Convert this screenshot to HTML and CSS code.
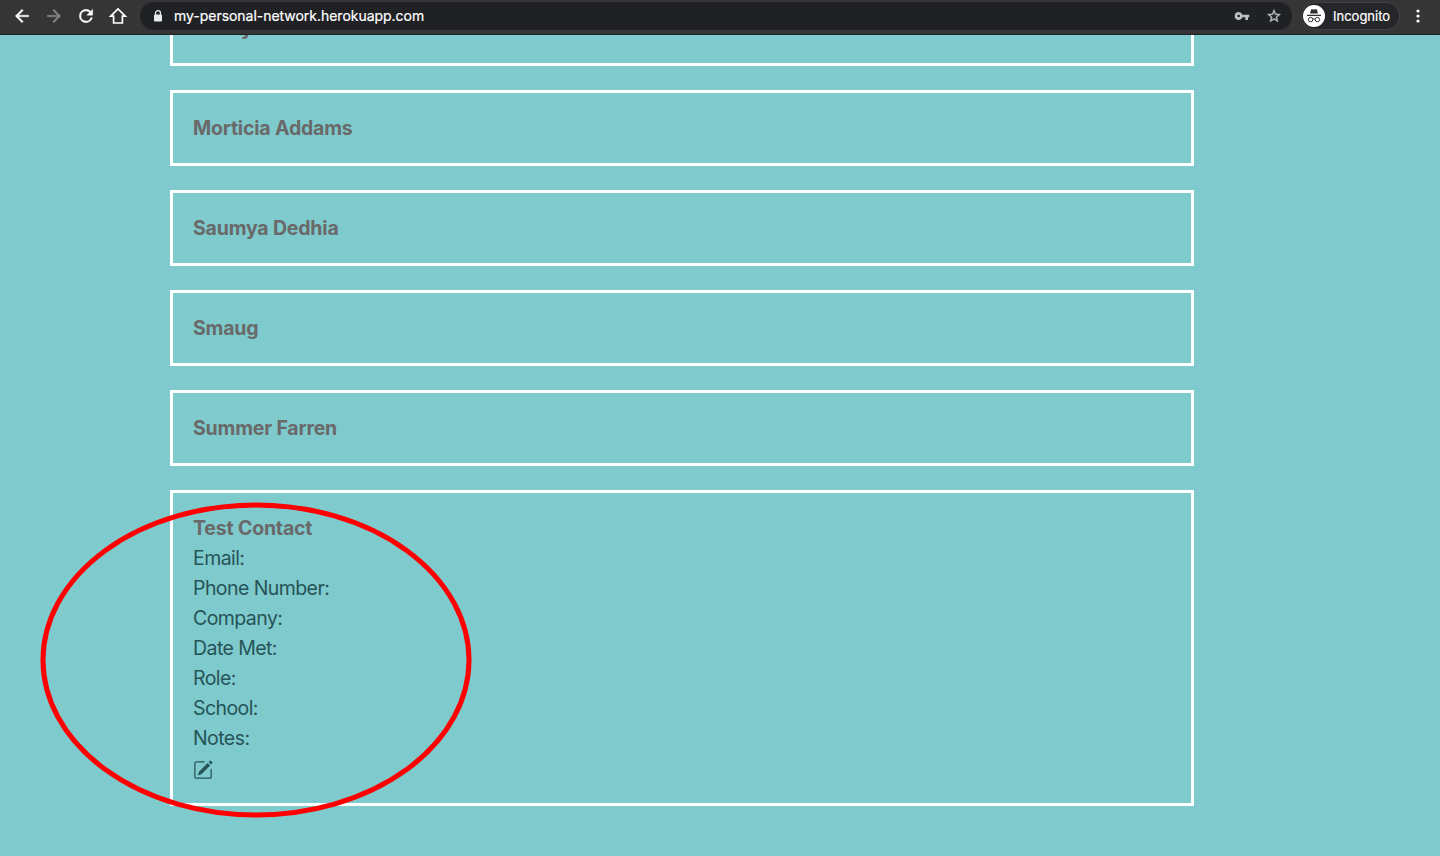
FILE: index.html
```html
<!DOCTYPE html>
<html lang="en">
<head>
<meta charset="utf-8">
<title>My Personal Network</title>
<link rel="stylesheet" href="styles.css">
</head>
<body>
<header class="toolbar">
  <nav class="nav">
    <svg class="icon" viewBox="0 0 24 24"><path d="M20 11H7.830l5.590-5.590L12 4l-8 8 8 8 1.410-1.410L7.830 13H20z"/></svg>
    <svg class="icon icon-off" viewBox="0 0 24 24"><path d="M4 11V13H16.170L10.590 18.590L12 20L20 12L12 4L10.590 5.410L16.170 11z"/></svg>
    <svg class="icon" viewBox="0 0 24 24"><path d="M17.650 6.350A7.960 7.960 0 0 0 12 4a8 8 0 1 0 7.730 10h-2.080A6 6 0 1 1 12 6c1.660 0 3.140.690 4.220 1.780L13 11h7V4z"/></svg>
    <svg class="icon icon-home" viewBox="0 0 20 20"><path d="M2.700 10.200H5.600V17H14.400V10.200H17.300L10 2.900z"/></svg>
  </nav>
  <div class="address">
    <svg class="lock" viewBox="0 0 10 12"><path d="M2.500 5V3.200a2.500 2.500 0 0 1 5 0V5" fill="none" stroke="#e8eaed" stroke-width="1.200"/><rect x="1" y="4.500" width="8" height="7" rx="1" fill="#e8eaed"/></svg>
    <span class="url">my-personal-network.herokuapp.com</span>
    <svg class="key" viewBox="0 0 24 24"><path d="M12.650 10A5.990 5.990 0 0 0 7 6a6 6 0 1 0 5.650 8H17v4h4v-4h2v-4zM7 14a2 2 0 1 1 0-4 2 2 0 0 1 0 4z"/></svg>
    <svg class="star" viewBox="0 0 24 24"><path d="M22 9.240l-7.190-.620L12 2 9.190 8.630 2 9.240l5.460 4.730L5.820 21 12 17.270 18.180 21l-1.630-7.030zM12 15.400l-3.760 2.270 1-4.280-3.320-2.880 4.380-.380L12 6.100l1.710 4.040 4.380.380-3.320 2.880 1 4.280z"/></svg>
  </div>
  <div class="profile">
    <svg class="avatar" viewBox="0 0 22 22"><circle cx="11" cy="11" r="11" fill="#fff"/><path d="M7 8.500L8 4.700Q8.200 4 9 4.200L11 4.600L13 4.200Q13.800 4 14 4.700L15 8.500zM4 9.800H18V11H4z" fill="#303134"/><g fill="none" stroke="#303134" stroke-width="1"><circle cx="7.600" cy="14.600" r="2.200"/><circle cx="14.400" cy="14.600" r="2.200"/><path d="M9.800 14.300Q11 13.500 12.200 14.300"/></g></svg>
    <span class="mode">Incognito</span>
  </div>
  <svg class="menu" viewBox="0 0 4 14"><circle cx="2" cy="2" r="1.600"/><circle cx="2" cy="7" r="1.600"/><circle cx="2" cy="12" r="1.600"/></svg>
</header>
<main class="contacts">
  <section class="card"><h2 class="name">Kenny Jones</h2></section>
  <section class="card"><h2 class="name">Morticia Addams</h2></section>
  <section class="card"><h2 class="name">Saumya Dedhia</h2></section>
  <section class="card"><h2 class="name">Smaug</h2></section>
  <section class="card"><h2 class="name">Summer Farren</h2></section>
  <section class="card card-open">
    <h2 class="name">Test Contact</h2>
    <p class="field">Email:</p>
    <p class="field">Phone Number:</p>
    <p class="field">Company:</p>
    <p class="field">Date Met:</p>
    <p class="field">Role:</p>
    <p class="field">School:</p>
    <p class="field">Notes:</p>
    <svg class="edit" viewBox="0 0 16 16"><path d="M15.502 1.940a.5.5 0 0 1 0 .706L14.459 3.690l-2-2L13.502.646a.5.5 0 0 1 .707 0l1.293 1.293zm-1.750 2.456l-2-2L4.939 9.210a.5.5 0 0 0-.121.196l-.805 2.414a.25.25 0 0 0 .316.316l2.414-.805a.5.5 0 0 0 .196-.120l6.813-6.814z"/><path d="M1 13.500A1.500 1.500 0 0 0 2.500 15h11a1.500 1.500 0 0 0 1.500-1.500v-6a.5.5 0 0 0-1 0v6a.5.5 0 0 1-.5.5h-11a.5.5 0 0 1-.5-.5v-11a.5.5 0 0 1 .5-.5H9a.5.5 0 0 0 0-1H2.500A1.500 1.500 0 0 0 1 2.500z"/></svg>
  </section>
</main>
<svg class="highlight" viewBox="0 0 432 316"><ellipse cx="216" cy="158" rx="213" ry="155" fill="none" stroke="#f00" stroke-width="5"/></svg>
</body>
</html>
```
FILE: styles.css
```css
* { box-sizing: border-box; }
body {
  margin: 0;
  height: 856px;
  overflow: hidden;
  display: flex;
  flex-direction: column;
  background: #7fcacd;
  font-family: Inter, "Liberation Sans", sans-serif;
}
svg { display: block; flex: none; }
.toolbar {
  flex: none;
  height: 35px;
  padding: 2px 19px 0 12px;
  display: flex;
  align-items: flex-start;
  background: #353535;
  border-bottom: 1px solid #202124;
}
.nav { display: flex; gap: 12px; width: 128px; padding-top: 4px; }
.icon { width: 20px; height: 20px; fill: #fff; stroke: #fff; stroke-width: 0.5; }
.icon-off { fill: #868686; stroke: #868686; }
.icon-home { fill: none; stroke-width: 1.7; }
.address {
  width: 1152px;
  height: 28px;
  border-radius: 14px;
  padding: 0 10px 0 13px;
  display: flex;
  align-items: center;
  background: #202124;
}
.lock { width: 10px; height: 12px; }
.url {
  flex: 1;
  margin-left: 11px;
  color: #fff;
  font-size: 14px;
  line-height: 20px;
  letter-spacing: -0.03px;
  -webkit-text-stroke: 0.2px #fff;
}
.key { width: 16px; height: 16px; margin-right: 16px; fill: #bdc1c6; }
.star { width: 16px; height: 16px; fill: #bdc1c6; stroke: #bdc1c6; stroke-width: 0.5; }
.profile {
  width: 99px;
  height: 28px;
  margin-left: 9px;
  padding-left: 1px;
  border: 1px solid #404144;
  border-radius: 14px;
  display: flex;
  align-items: center;
  background: #252629;
}
.avatar { width: 22px; height: 22px; }
.mode {
  margin-left: 8px;
  color: #fff;
  font-size: 13px;
  line-height: 20px;
  -webkit-text-stroke: 0.2px #fff;
}
.menu { width: 4px; height: 14px; margin: 7px 0 0 16px; fill: #fff; }
.contacts {
  flex: 1;
  min-height: 0;
  overflow: hidden;
  width: 1024px;
  margin-left: 170px;
  display: flex;
  flex-direction: column;
  justify-content: flex-end;
  gap: 24px;
  padding-bottom: 50px;
}
.card {
  flex: none;
  height: 76px;
  padding: 20px;
  border: 3px solid #fff;
}
.card-open { height: 316px; }
.name, .field { margin: 0; font-size: 19.5px; line-height: 30px; }
.name { color: #696969; font-weight: 700; letter-spacing: -0.18px; }
.field { color: #265457; font-weight: 400; letter-spacing: -0.57px; }
.edit { width: 20px; height: 20px; margin-top: 7px; fill: #265457; }
.highlight {
  position: absolute;
  left: 40px;
  top: 502px;
  width: 432px;
  height: 316px;
}
```
